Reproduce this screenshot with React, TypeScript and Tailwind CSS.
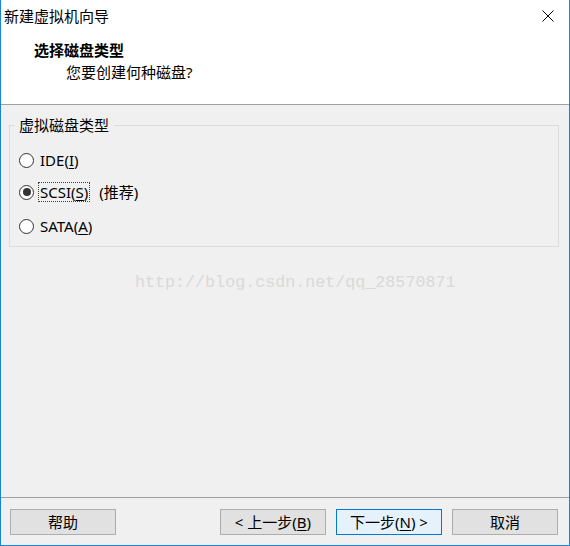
import React from "react";

const font = "font-['Noto_Sans','Noto_Sans_CJK_SC',sans-serif]";

function Radio({ checked }: { checked?: boolean }) {
  return (
    <span className="w-[15px] h-[15px] rounded-full border border-[#333333] bg-white flex items-center justify-center shrink-0">
      {checked && <span className="w-[8px] h-[8px] rounded-full bg-[#333333]" />}
    </span>
  );
}

function Option({
  label,
  mnemonic,
  checked,
  focused,
  note,
}: {
  label: string;
  mnemonic: string;
  checked?: boolean;
  focused?: boolean;
  note?: string;
}) {
  return (
    <div className="h-[20px] flex items-center">
      <Radio checked={checked} />
      <span
        className={
          "ml-[4px] h-[20px] px-[1px] flex items-center border " +
          (focused ? "border-dotted border-[#444]" : "border-transparent")
        }
      >
        {label}(<span className="underline underline-offset-2">{mnemonic}</span>)
      </span>
      {note && <span className="ml-[9px]">{note}</span>}
    </div>
  );
}

function Btn({ children, primary }: { children: React.ReactNode; primary?: boolean }) {
  return (
    <button
      className={
        "w-[106px] h-[26px] border text-[15px] leading-[20px] text-black flex items-center justify-center " +
        (primary ? "bg-[#e5f1fb] border-[#0078d7]" : "bg-[#e1e1e1] border-[#adadad]")
      }
    >
      {children}
    </button>
  );
}

export default function App() {
  return (
    <div
      className={`w-[570px] h-[546px] flex flex-col bg-[#f0f0f0] border-x border-b border-[#1883d7] text-black text-[15px] leading-[20px] ${font}`}
    >
      {/* title + header */}
      <div className="bg-white h-[105px] border-b border-[#a0a0a0] shrink-0">
        <div className="h-[32px] flex items-center justify-between pl-[3px]">
          <span>新建虚拟机向导</span>
          <svg width="46" height="32" viewBox="0 0 46 32" className="mr-[-1px]">
            <path d="M18.5 10.5 L29.5 21.5 M29.5 10.5 L18.5 21.5" stroke="#000" strokeWidth="1" fill="none" />
          </svg>
        </div>
        <div className="pl-[33px] mt-[8px]">
          <div className="font-bold">选择磁盘类型</div>
          <div className="ml-[32px] mt-[2px]">您要创建何种磁盘?</div>
        </div>
      </div>

      {/* body */}
      <div className="flex-1 flex flex-col">
        <fieldset className="ml-[8px] mr-[10px] mt-[10px] border border-[#dcdcdc] px-[9px] pb-[10px]">
          <legend className="ml-[-5px] px-[5px] h-[20px]">虚拟磁盘类型</legend>
          <div className="mt-[15px]">
            <Option label="IDE" mnemonic="I" />
          </div>
          <div className="mt-[12px]">
            <Option label="SCSI" mnemonic="S" checked focused note="(推荐)" />
          </div>
          <div className="mt-[14px]">
            <Option label="SATA" mnemonic="A" />
          </div>
        </fieldset>

        <div className="mt-[26px] pl-[134px] font-['Liberation_Mono',monospace] text-[16.7px] leading-[20px] text-[#d9d9d9]">
          http://blog.csdn.net/qq_28570871
        </div>

        {/* footer */}
        <div className="mt-auto h-[48px] border-t border-[#a0a0a0] pt-[11px] pl-[9px] pr-[11px] flex">
          <Btn>帮助</Btn>
          <div className="flex-1" />
          <div className="flex gap-[10px]">
            <Btn>
              &lt; 上一步(<span className="underline underline-offset-2">B</span>)
            </Btn>
            <Btn primary>
              下一步(<span className="underline underline-offset-2">N</span>) &gt;
            </Btn>
            <Btn>取消</Btn>
          </div>
        </div>
      </div>
    </div>
  );
}
